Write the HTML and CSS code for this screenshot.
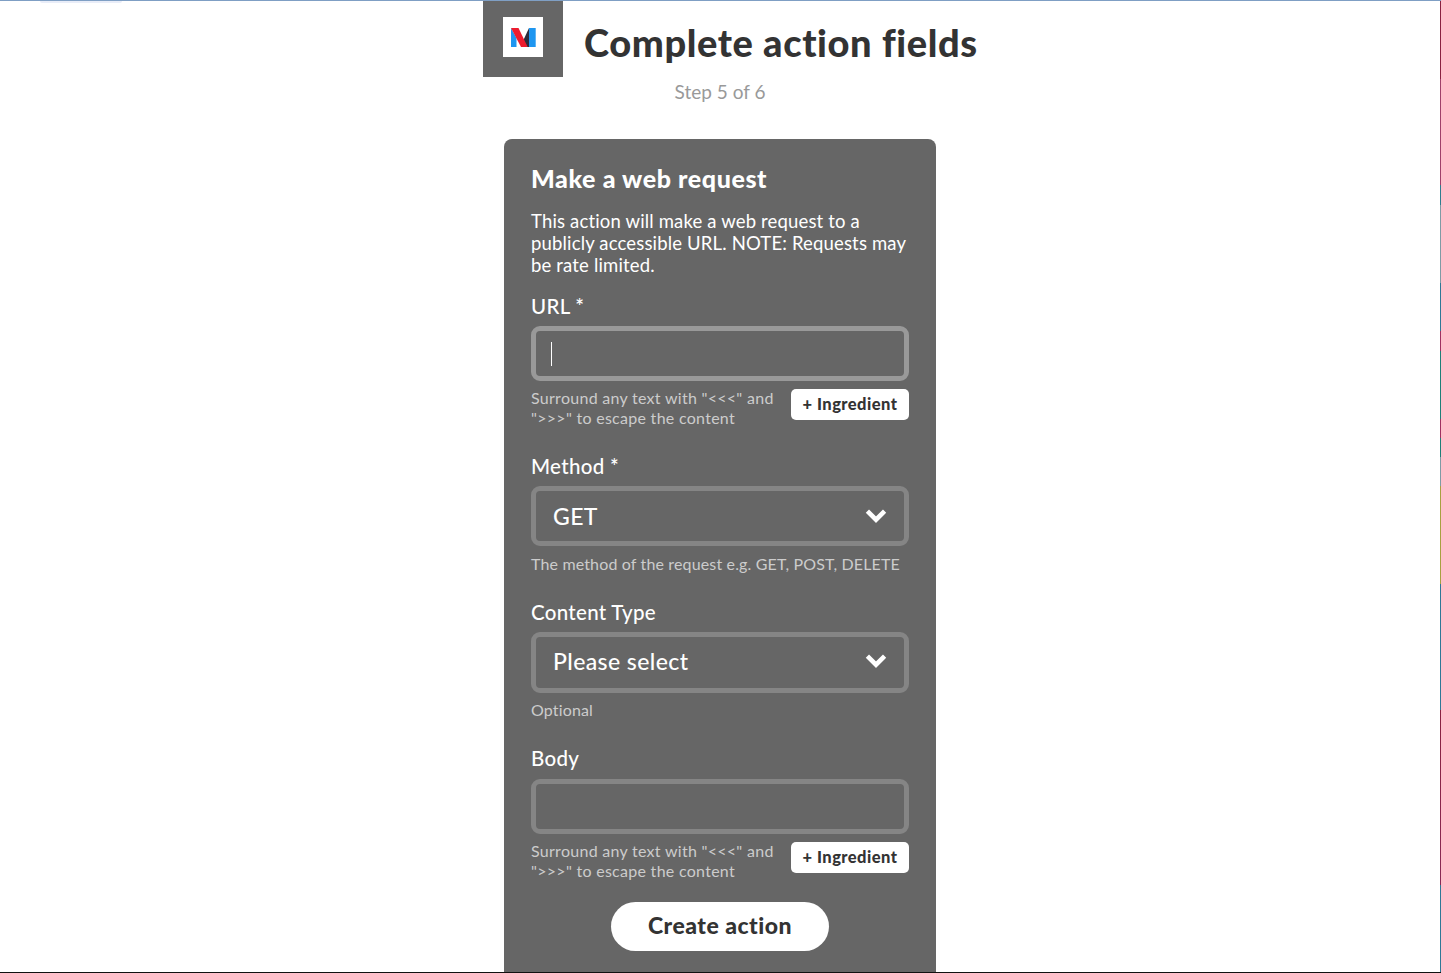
FILE: index.html
```html
<!DOCTYPE html>
<html lang="en">
<head>
    <meta charset="UTF-8">
    <meta name="viewport" content="width=device-width, initial-scale=1.0">
    <title>Complete action fields</title>
    <link rel="stylesheet" href="styles.css">
</head>
<body>

    <div class="top-glow"></div>

    <div class="page">
        <div class="header">
            <div class="service-icon">
                <div class="logo-box">
                    <svg class="logo" viewBox="0 0 25 19" aria-hidden="true">
                        <path fill="#1e96f0" d="M0 0l5.500 10v9H0z"/>
                        <path fill="#1e96f0" d="M18 0h6.700v19H18z"/>
                        <path fill="#2b2d3c" d="M18 0v19h-3.500l-2.500-6z"/>
                        <path fill="#ed1c2e" d="M0 0h7.500l9.200 19H10z"/>
                    </svg>
                </div>
            </div>
            <h1 class="title">Complete action fields</h1>
        </div>
        <p class="step">Step 5 of 6</p>

        <form class="card">
            <h2 class="card-title">Make a web request</h2>
            <p class="card-text">This action will make a web request to a publicly accessible URL. NOTE: Requests may be rate limited.</p>

            <div class="group group-url">
                <label class="label">URL *</label>
                <div class="field field-focus"><span class="caret"></span></div>
                <div class="help-row">
                    <p class="help">Surround any text with "&lt;&lt;&lt;" and "&gt;&gt;&gt;" to escape the content</p>
                    <button type="button" class="ingredient">+ Ingredient</button>
                </div>
            </div>

            <div class="group group-method">
                <label class="label">Method *</label>
                <div class="select">
                    <span>GET</span>
                    <svg class="chevron" viewBox="0 0 22 14" aria-hidden="true"><path d="M2.400 2.200 11 10.700l8.600-8.500"/></svg>
                </div>
                <p class="help help-single">The method of the request e.g. GET, POST, DELETE</p>
            </div>

            <div class="group group-type">
                <label class="label">Content Type</label>
                <div class="select">
                    <span>Please select</span>
                    <svg class="chevron" viewBox="0 0 22 14" aria-hidden="true"><path d="M2.400 2.200 11 10.700l8.600-8.500"/></svg>
                </div>
                <p class="help help-single">Optional</p>
            </div>

            <div class="group group-body">
                <label class="label">Body</label>
                <div class="field"></div>
                <div class="help-row">
                    <p class="help">Surround any text with "&lt;&lt;&lt;" and "&gt;&gt;&gt;" to escape the content</p>
                    <button type="button" class="ingredient">+ Ingredient</button>
                </div>
            </div>

            <button type="button" class="submit">Create action</button>
        </form>
    </div>
    <div class="edge-right"></div>

</body>
</html>
```

FILE: styles.css
```css
html, body {
    height: 100%;
}

body {
    font-family: 'Lato', 'Open Sans', sans-serif;
    background-color: #fff;
    margin: 0;
    padding: 0;
    display: flex;
    height: 973px;
    overflow: hidden;
    box-sizing: border-box;
    border-top: 1px solid #7f9fc4;
    border-bottom: 1px solid #111;
}

.top-glow {
    position: absolute;
    top: 1px;
    left: 40px;
    width: 82px;
    height: 2px;
    border-radius: 0 0 6px 6px;
    background-color: #e9edf8;
}

.page {
    flex: 1;
    display: flex;
    flex-direction: column;
    align-items: center;
    overflow: hidden;
}

.edge-right {
    width: 1px;
    background: linear-gradient(to bottom,
        #8a2040 0, #8a2040 8%,
        #a0406a 8%, #a0406a 19%,
        #2f7d8f 19%, #2f7d8f 21%,
        #7f9ba5 21%, #7f9ba5 29%,
        #2f7896 29%, #2f7896 34%,
        #a03060 34%, #a03060 36%,
        #1f7f78 36%, #1f7f78 43%,
        #a03060 43%, #a03060 45%,
        #1f7f78 45%, #1f7f78 47%,
        #7f9ba5 47%, #7f9ba5 50%,
        #a8a040 50%, #a8a040 60%,
        #2f7896 60%, #2f7896 73%,
        #8a2040 73%, #8a2a55 91%,
        #2f7896 91%, #2f7896 100%);
}

.header {
    display: flex;
    align-items: center;
    width: 494px;
    margin-left: 20px;
}

.service-icon {
    width: 80px;
    height: 76px;
    box-sizing: border-box;
    padding-bottom: 4px;
    background-color: #666;
    display: flex;
    align-items: center;
    justify-content: center;
    flex-shrink: 0;
}

.logo-box {
    width: 40px;
    height: 40px;
    background-color: #fff;
    display: flex;
    align-items: center;
    justify-content: center;
}

.logo {
    width: 25px;
    height: 19px;
}

.title {
    margin: 6px 0 0 21px;
    font-size: 38px;
    font-weight: 900;
    color: #333;
    white-space: nowrap;
    letter-spacing: 0.6px;
}

.step {
    margin: 3px 0 0;
    font-size: 19px;
    line-height: 24px;
    color: #999;
}

.card {
    width: 432px;
    height: 900px;
    margin-top: 35px;
    box-sizing: border-box;
    padding: 23px 27px 0;
    background-color: #666;
    border-radius: 8px 8px 0 0;
    color: #fff;
    flex-shrink: 0;
}

.card-title {
    margin: 0;
    font-size: 25px;
    line-height: 32px;
    font-weight: 900;
    letter-spacing: 0.6px;
}

.card-text {
    margin: 16px 0 0;
    font-size: 18.5px;
    line-height: 22px;
    letter-spacing: 0.16px;
}

.group-url {
    margin-top: 18px;
}

.group-method {
    margin-top: 26px;
}

.group-type {
    margin-top: 26px;
}

.group-type .select {
    height: 61px;
    padding-bottom: 3px;
}

.group-type .help-single {
    margin-top: 7px;
}

.group-body {
    margin-top: 26px;
}

.group-body .label {
    margin-bottom: 9px;
}

.label {
    display: block;
    font-size: 20.5px;
    line-height: 24px;
    margin-bottom: 8px;
    font-weight: 500;
    letter-spacing: 0.3px;
}

.field {
    height: 55px;
    box-sizing: border-box;
    border: 5px solid #858585;
    border-radius: 9px;
    display: flex;
    align-items: center;
    padding-left: 15px;
}

.field-focus {
    border-color: #999;
}

.caret {
    width: 1px;
    height: 24px;
    background-color: #fff;
}

.help-row {
    display: flex;
    justify-content: space-between;
    align-items: flex-start;
    margin-top: 8px;
}

.help {
    margin: -1px 0 0;
    width: 255px;
    font-size: 16px;
    line-height: 20px;
    color: #ccc;
    letter-spacing: 0.28px;
}

.help-single {
    width: auto;
    margin-top: 8px;
    letter-spacing: 0.15px;
}

.ingredient {
    width: 118px;
    height: 31px;
    padding: 0 0 1px;
    border: none;
    border-radius: 5px;
    background-color: #fff;
    color: #333;
    font-family: inherit;
    font-size: 16.5px;
    font-weight: 900;
    letter-spacing: 0.45px;
    cursor: pointer;
}

.select {
    height: 60px;
    box-sizing: border-box;
    border: 5px solid #858585;
    border-radius: 9px;
    display: flex;
    align-items: center;
    justify-content: space-between;
    padding: 0 17px 0 17px;
    font-size: 23px;
    font-weight: 500;
    letter-spacing: 0.4px;
}

.chevron {
    width: 22px;
    height: 14px;
    fill: none;
    stroke: #fff;
    stroke-width: 4.6;
}

.submit {
    display: block;
    width: 218px;
    height: 49px;
    margin: 21px auto 0;
    padding: 0 0 3px;
    border: none;
    border-radius: 25px;
    background-color: #fff;
    color: #333;
    font-family: inherit;
    font-size: 23px;
    font-weight: 900;
    letter-spacing: 0.5px;
    cursor: pointer;
}
```
